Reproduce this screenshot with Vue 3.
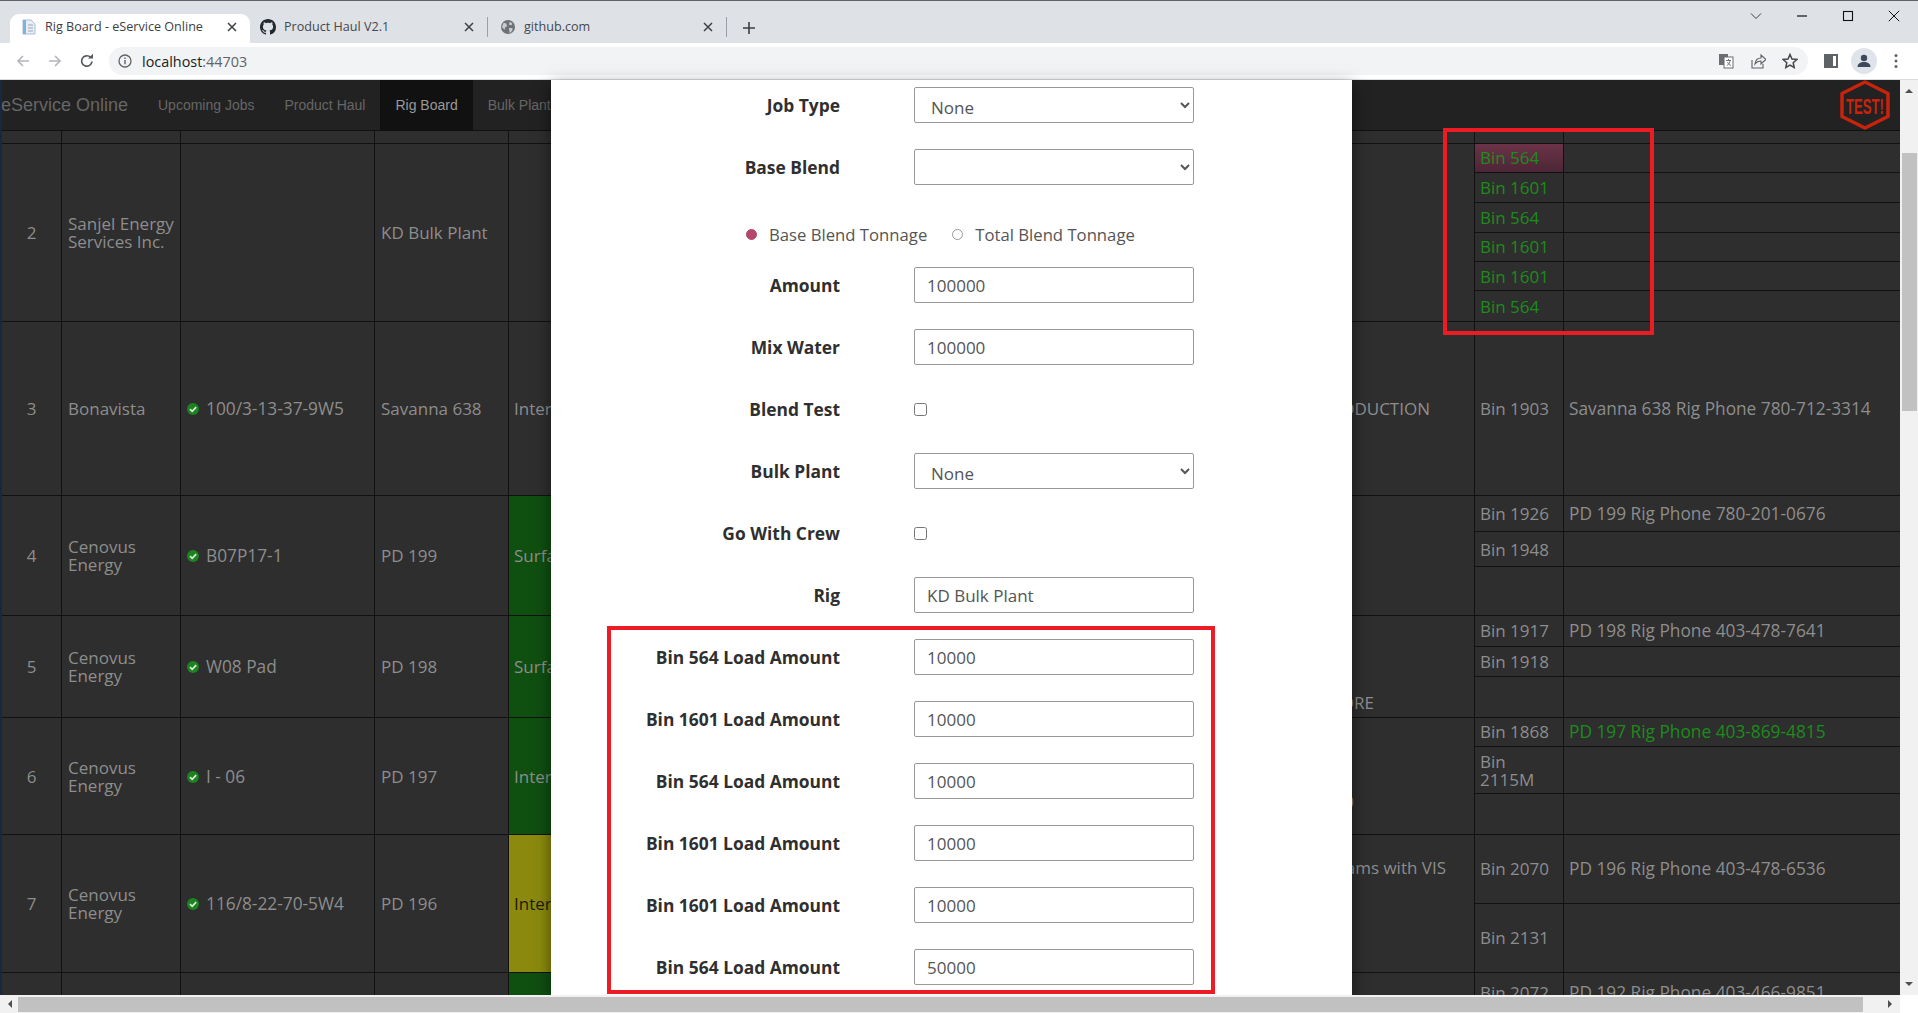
<template>
  <div class="window">
    <div class="tabstrip">
      <div class="tab active">
        <svg class="fav" viewBox="0 0 16 16" width="16" height="16">
          <path d="M2 1h8l4 4v10H2z" fill="#e8eef5" stroke="#a9bdd3" />
          <path d="M2 1h3v14H2z" fill="#7fb2e0" />
          <path d="M7 6h5M7 9h5M7 12h5" stroke="#9aa7b5" />
        </svg>
        <span class="tab-title">Rig Board - eService Online</span>
        <svg class="tab-x" viewBox="0 0 10 10" width="10" height="10"><path d="M1 1l8 8M9 1l-8 8" stroke="#3c4043" stroke-width="1.5" /></svg>
      </div>
      <div class="tab second">
        <svg class="fav" viewBox="0 0 16 16" width="16" height="16">
          <path fill="#24292f" d="M8 0C3.58 0 0 3.58 0 8c0 3.54 2.29 6.53 5.47 7.59.4.07.55-.17.55-.38 0-.19-.01-.82-.01-1.49-2.01.37-2.53-.49-2.69-.94-.09-.23-.48-.94-.82-1.13-.28-.15-.68-.52-.01-.53.63-.01 1.08.58 1.23.82.72 1.21 1.87.87 2.33.66.07-.52.28-.87.51-1.07-1.78-.2-3.64-.89-3.64-3.95 0-.87.31-1.59.82-2.15-.08-.2-.36-1.02.08-2.12 0 0 .67-.21 2.2.82.64-.18 1.32-.27 2-.27.68 0 1.36.09 2 .27 1.53-1.04 2.2-.82 2.2-.82.44 1.1.16 1.92.08 2.12.51.56.82 1.27.82 2.15 0 3.07-1.87 3.75-3.65 3.95.29.25.54.73.54 1.48 0 1.07-.01 1.93-.01 2.2 0 .21.15.46.55.38A8.013 8.013 0 0016 8c0-4.42-3.58-8-8-8z" />
        </svg>
        <span class="tab-title">Product Haul V2.1</span>
        <svg class="tab-x" viewBox="0 0 10 10" width="10" height="10"><path d="M1 1l8 8M9 1l-8 8" stroke="#3c4043" stroke-width="1.5" /></svg>
      </div>
      <div class="tab-sep"></div>
      <div class="tab third">
        <svg class="fav globe" viewBox="0 0 16 16" width="14" height="14">
          <circle cx="8" cy="8" r="8" fill="#6e7276" />
          <path d="M3 3l3 1 1 3-2 1-1 3-3-3zM10 2l3 2-1 2-3-1zM9 9l4 0 0 3-3 3z" fill="#c9ccd0" />
        </svg>
        <span class="tab-title">github.com</span>
        <svg class="tab-x" viewBox="0 0 10 10" width="10" height="10"><path d="M1 1l8 8M9 1l-8 8" stroke="#3c4043" stroke-width="1.5" /></svg>
      </div>
      <div class="tab-sep"></div>
      <svg class="plus" viewBox="0 0 12 12" width="12" height="12">
        <path d="M6 0v12M0 6h12" stroke="#3c4043" stroke-width="1.6" />
      </svg>
      <div class="win-controls">
        <svg viewBox="0 0 12 12" width="12" height="12"><path d="M1 3.5l5 5 5-5" fill="none" stroke="#3c4043" /></svg>
        <svg viewBox="0 0 12 12" width="12" height="12"><path d="M1 6h10" stroke="#111" stroke-width="1.2" /></svg>
        <svg viewBox="0 0 12 12" width="12" height="12"><rect x="1.5" y="1.5" width="9" height="9" fill="none" stroke="#111" stroke-width="1.1" /></svg>
        <svg viewBox="0 0 12 12" width="12" height="12"><path d="M.8.8l10.4 10.4M11.2.8L.8 11.2" stroke="#111" /></svg>
      </div>
    </div>

    <div class="toolbar">
      <svg class="nav-ico" viewBox="0 0 16 16" width="16" height="16"><path d="M14 8H3M8 3L3 8l5 5" fill="none" stroke="#b4b7bb" stroke-width="1.7" /></svg>
      <svg class="nav-ico" viewBox="0 0 16 16" width="16" height="16"><path d="M2 8h11M8 3l5 5-5 5" fill="none" stroke="#b4b7bb" stroke-width="1.7" /></svg>
      <svg class="nav-ico" viewBox="0 0 16 16" width="16" height="16"><path d="M13 8.5A5.2 5.2 0 1 1 11.6 4.4" fill="none" stroke="#55585c" stroke-width="1.7" /><path d="M9 5.6h5V.8z" fill="#55585c" /></svg>
      <div class="omnibox">
        <svg viewBox="0 0 14 14" width="14" height="14">
          <circle cx="7" cy="7" r="6" fill="none" stroke="#5f6368" stroke-width="1.3" />
          <path d="M7 6v4.2M7 3.6v1.3" stroke="#5f6368" stroke-width="1.4" />
        </svg>
        <span class="url">localhost<em>:44703</em></span>
        <div class="omni-right">
          <svg viewBox="0 0 16 16" width="16" height="16">
            <rect x="1" y="1" width="9" height="11" fill="#6a6d71" />
            <rect x="6" y="4" width="9" height="11" fill="#fff" stroke="#6a6d71" />
            <path d="M3 6.5h3M8 7.500h5M10.500 6v1.500M9 12.500c2-1 3-3 3-5M9.500 9c.5 1.500 2 3 3.500 3.500" fill="none" stroke="#6a6d71" stroke-width=".9" />
          </svg>
          <svg viewBox="0 0 16 16" width="16" height="16">
            <path d="M2 7v8h11v-4" fill="none" stroke="#5f6368" stroke-width="1.1" />
            <path d="M5 11c.5-4 3-6 6-6V2l5 4.5L11 11V8c-2.500 0-4.500 1-6 3z" fill="none" stroke="#5f6368" stroke-width="1.1" />
          </svg>
          <svg viewBox="0 0 16 16" width="16" height="16">
            <path d="M8 1.500l2 4.500 4.800.5-3.600 3.200 1 4.800L8 12.100l-4.200 2.400 1-4.800L1.200 6.500 6 6z" fill="none" stroke="#44474b" stroke-width="1.5" />
          </svg>
        </div>
      </div>
      <div class="tool-right">
        <svg viewBox="0 0 14 14" width="14" height="14"><path d="M0 0h14v14H0zM9 2v10h3V2z" fill="#5f6368" fill-rule="evenodd" /></svg>
        <div class="avatar">
          <svg viewBox="0 0 16 16" width="16" height="16">
            <circle cx="8" cy="5" r="3.200" fill="#3c4a5c" />
            <path d="M1.500 14c0-3.500 3-5 6.500-5s6.500 1.500 6.500 5z" fill="#3c4a5c" />
          </svg>
        </div>
        <svg viewBox="0 0 4 16" width="4" height="16">
          <circle cx="2" cy="2.500" r="1.500" fill="#5f6368" /><circle cx="2" cy="8" r="1.500" fill="#5f6368" /><circle cx="2" cy="13.500" r="1.500" fill="#5f6368" />
        </svg>
      </div>
    </div>

    <div class="viewport">
      <div class="page-col">
        <div class="page">
          <nav class="navbar">
            <span class="brand">eService Online</span>
            <a>Upcoming Jobs</a>
            <a>Product Haul</a>
            <a class="on">Rig Board</a>
            <a>Bulk Plant</a>
            <svg class="test-logo" viewBox="0 0 52 50" width="52" height="50">
              <path d="M26 2L49 13.500V36.500L26 48 3 36.500V13.500z" fill="none" stroke="#c8230d" stroke-width="3.500" stroke-linejoin="round" />
              <text x="26" y="33.500" text-anchor="middle" textLength="38" lengthAdjust="spacingAndGlyphs" class="test-txt">TEST!</text>
            </svg>
          </nav>
          <div class="row thead" style="height: 13px">
            <div class="c1"></div><div class="c2"></div><div class="c3"></div><div class="c4"></div><div class="c5"></div>
            <div class="note"></div><div class="bins"><div class="bin" style="height: 12px"><span class="b-name"></span><span class="b-phone"></span></div></div>
          </div>
          <div v-for="r in rows" :key="r.key" class="row" :style="{ height: r.h + 'px' }">
            <div class="c1">{{ r.n }}</div>
            <div class="c2"><span>{{ r.client }}</span></div>
            <div class="c3">
              <svg v-if="r.well" viewBox="0 0 12 12" width="12" height="12" class="ok">
                <circle cx="6" cy="6" r="6" fill="#1d8321" />
                <path d="M3 6.200l2.200 2.100L9.200 4.200" fill="none" stroke="#d5e8d5" stroke-width="1.800" />
              </svg>
              <span>{{ r.well }}</span>
            </div>
            <div class="c4">{{ r.rig }}</div>
            <div class="c5" :class="r.jobClass">{{ r.job }}</div>
            <div class="note">
              <span v-if="r.note" class="note-txt" :style="{ top: r.noteTop + 'px', right: r.noteRight + 'px' }">{{ r.note }}</span>
            </div>
            <div class="bins">
              <div v-for="(b, i) in r.bins" :key="i" class="bin" :style="{ height: b.h + 'px' }">
                <span class="b-name" :class="{ green: b.green, sel: b.sel }">{{ b.name }}</span>
                <span class="b-phone" :class="{ green: b.phoneGreen }">{{ b.phone }}</span>
              </div>
            </div>
          </div>
          <div class="annot annot-bins"></div>
        </div>
        <div class="hscroll">
          <span class="arrow-l"></span>
          <div class="h-thumb"></div>
          <span class="arrow-r"></span>
        </div>
      </div>
      <div class="vscroll">
        <span class="arrow-u"></span>
        <div class="v-thumb"></div>
        <span class="arrow-d"></span>
        <div class="corner"></div>
      </div>

      <div class="modal">
        <div class="frow">
          <label>Job Type</label>
          <select class="ctl sel-ctl"><option>None</option></select>
        </div>
        <div class="frow">
          <label>Base Blend</label>
          <select class="ctl sel-ctl"><option></option></select>
        </div>
        <div class="radio-row">
          <span class="radio checked"></span><span class="radio-label">Base Blend Tonnage</span>
          <span class="radio"></span><span class="radio-label">Total Blend Tonnage</span>
        </div>
        <div v-for="f in fields" :key="f.id" class="frow">
          <label>{{ f.label }}</label>
          <select v-if="f.type === 'select'" class="ctl sel-ctl"><option>{{ f.value }}</option></select>
          <input v-else-if="f.type === 'check'" type="checkbox" class="chk" />
          <input v-else type="text" class="ctl" :value="f.value" />
        </div>
        <div class="annot annot-form"></div>
      </div>
    </div>
  </div>
</template>

<script setup>
const phone = (rig, num) => `${rig} Rig Phone ${num}`

const rows = [
  {
    key: 2, n: 2, h: 178, client: 'Sanjel Energy Services Inc.', well: '', rig: 'KD Bulk Plant', job: '',
    bins: [
      { name: 'Bin 564', h: 29, green: true, sel: true },
      { name: 'Bin 1601', h: 30, green: true },
      { name: 'Bin 564', h: 30, green: true },
      { name: 'Bin 1601', h: 30, green: true },
      { name: 'Bin 1601', h: 29, green: true },
      { name: 'Bin 564', h: 30, green: true }
    ]
  },
  {
    key: 3, n: 3, h: 174, client: 'Bonavista', well: '100/3-13-37-9W5', rig: 'Savanna 638', job: 'Intermediate',
    note: 'PRODUCTION', noteTop: 78, noteRight: 44,
    bins: [{ name: 'Bin 1903', h: 174, phone: phone('Savanna 638', '780-712-3314') }]
  },
  {
    key: 4, n: 4, h: 120, client: 'Cenovus Energy', well: 'B07P17-1', rig: 'PD 199', job: 'Surface', jobClass: 'job-green',
    bins: [
      { name: 'Bin 1926', h: 36, phone: phone('PD 199', '780-201-0676') },
      { name: 'Bin 1948', h: 36 },
      { name: '', h: 48 }
    ]
  },
  {
    key: 5, n: 5, h: 102, client: 'Cenovus Energy', well: 'W08 Pad', rig: 'PD 198', job: 'Surface', jobClass: 'job-green',
    note: 'CORE', noteTop: 78, noteRight: 100,
    bins: [
      { name: 'Bin 1917', h: 31, phone: phone('PD 198', '403-478-7641') },
      { name: 'Bin 1918', h: 31 },
      { name: '', h: 40 }
    ]
  },
  {
    key: 6, n: 6, h: 117, client: 'Cenovus Energy', well: 'I - 06', rig: 'PD 197', job: 'Intermediate', jobClass: 'job-green',
    note: '0', noteTop: 75, noteRight: 120,
    bins: [
      { name: 'Bin 1868', h: 29, phone: phone('PD 197', '403-869-4815'), phoneGreen: true },
      { name: 'Bin 2115M', h: 48 },
      { name: '', h: 40 }
    ]
  },
  {
    key: 7, n: 7, h: 138, client: 'Cenovus Energy', well: '116/8-22-70-5W4', rig: 'PD 196', job: 'Intermediate', jobClass: 'job-olive',
    note: 'Rams with VIS', noteTop: 24, noteRight: 28,
    bins: [
      { name: 'Bin 2070', h: 69, phone: phone('PD 196', '403-478-6536') },
      { name: 'Bin 2131', h: 69 }
    ]
  },
  {
    key: 8, h: 60, client: '', well: '', rig: '', job: '', jobClass: 'job-green',
    bins: [{ name: 'Bin 2072', h: 38, phone: phone('PD 192', '403-466-9851') }]
  }
]

const loads = ['564', '1601', '564', '1601', '1601', '564']

const fields = [
  { id: 'amount', label: 'Amount', value: '100000' },
  { id: 'water', label: 'Mix Water', value: '100000' },
  { id: 'test', label: 'Blend Test', type: 'check' },
  { id: 'plant', label: 'Bulk Plant', type: 'select', value: 'None' },
  { id: 'crew', label: 'Go With Crew', type: 'check' },
  { id: 'rig', label: 'Rig', value: 'KD Bulk Plant' },
  ...loads.map((bin, i) => ({
    id: 'load' + i,
    label: `Bin ${bin} Load Amount`,
    value: i === 5 ? '50000' : '10000'
  }))
]
</script>

<style>
html, body { margin: 0; overflow: hidden; }
</style>

<style scoped>
.window { width: 1918px; height: 1013px; display: flex; flex-direction: column; font-family: "Open Sans", "Noto Sans", sans-serif; overflow: hidden; }

.tabstrip { height: 43px; box-sizing: border-box; background: #dee1e6; border-top: 1px solid #5f6368; display: flex; align-items: flex-end; padding-left: 10px; position: relative; }
.tab { width: 240px; height: 29px; box-sizing: border-box; padding: 0 11px 4px; display: flex; align-items: center; font-size: 12.6px; color: #45484c; flex: none; }
.tab.second { width: 237px; padding-left: 10px; }
.tab.third { width: 238px; padding-left: 12px; }
.tab.third .tab-title { margin-left: 9px; }
.tab.active { background: #fff; border-radius: 9px 9px 0 0; color: #3c4043; }
.tab-title { margin-left: 8px; flex: 1; white-space: nowrap; }
.tab-x { flex: none; margin-right: 2px; }
.fav { flex: none; }
.globe { margin-left: 1px; }
.tab-sep { width: 1px; height: 20px; background: #9aa0a6; margin-bottom: 6px; flex: none; }
.plus { margin: 0 0 9px 16px; }
.win-controls { margin-left: auto; align-self: flex-start; display: flex; gap: 34px; padding: 9px 18px 0 0; }

.toolbar { height: 37px; box-sizing: border-box; background: #fff; border-bottom: 1px solid #dadce0; display: flex; align-items: center; padding: 0 17px 0 15px; }
.nav-ico { margin-right: 16px; flex: none; }
.omnibox { width: 1699px; margin-left: -2px; height: 28px; background: #f1f3f4; border-radius: 14px; display: flex; align-items: center; padding-left: 9px; box-sizing: border-box; flex: none; }
.url { font-size: 14.4px; margin-left: 10px; color: #202124; }
.url em { font-style: normal; color: #5f6368; }
.omni-right { margin-left: auto; display: flex; gap: 16px; padding-right: 10px; }
.tool-right { display: flex; align-items: center; margin-left: 16px; gap: 17px; }
.avatar { width: 26px; height: 26px; margin-left: -4px; border-radius: 50%; background: #dfe3ea; display: flex; align-items: center; justify-content: center; }

.viewport { height: 933px; display: flex; position: relative; }
.page-col { width: 1900px; display: flex; flex-direction: column; flex: none; }
.page { height: 915px; background: #2e2e2e; overflow: hidden; position: relative; border-left: 2px solid #1a2744; box-sizing: border-box; color: #8d8d8d; font-size: 17px; line-height: 18px; }

.navbar { height: 51px; box-sizing: border-box; background: #222; border-bottom: 1px solid #101010; display: flex; font-family: "Liberation Sans", Arial, sans-serif; font-size: 14px; color: #666; position: relative; }
.navbar .brand { font-size: 18px; line-height: 50px; width: 142px; margin-left: -1px; flex: none; color: #666; }
.navbar a { padding: 0 15px; line-height: 50px; flex: none; }
.navbar a.on { background: #111; color: #999; }
.test-logo { position: absolute; right: 9px; top: 0; }
.test-txt { font-family: "Liberation Sans", Arial, sans-serif; font-weight: 700; font-size: 22px; fill: #c8230d; }

.row { display: flex; border-bottom: 1px solid #111; box-sizing: border-box; flex: none; }
.thead { background: #2e2e2e; }
.row > div { flex: none; box-sizing: border-box; }
.c1, .c2, .c3, .c4, .b-name { border-right: 1px solid #111; }
.c1 { width: 60px; padding-top: 1px; display: flex; align-items: center; justify-content: center; }
.c2 { width: 119px; padding: 1px 6px 0; display: flex; align-items: center; }
.c3 { width: 194px; padding: 1px 6px 0; display: flex; align-items: center; gap: 7px; font-size: 17.3px; }
.c4 { width: 134px; padding: 1px 6px 0; display: flex; align-items: center; }
.c5 { width: 100px; padding: 1px 5px 0; display: flex; align-items: center; white-space: nowrap; }
.job-green { background: #0f4f10; }
.job-olive { background: #8b8a0e; color: #1c1c00; }
.row > .note { width: 866px; position: relative; border-right: 1px solid #111; }
.note-txt { position: absolute; white-space: nowrap; }
.row > .bins { width: 425px; display: flex; flex-direction: column; }
.bin { display: flex; box-sizing: border-box; border-bottom: 1px solid #111; }
.bin:last-child { border-bottom: 0; }
.b-name { width: 89px; flex: none; box-sizing: border-box; padding: 1px 5px 0; display: flex; align-items: center; }
.b-phone { flex: 1; padding: 1px 5px 0; display: flex; align-items: center; white-space: nowrap; font-size: 17.3px; }
.green { color: #1c8c1c; }
.sel { background: linear-gradient(#6b3347, #4c2636); }

.annot { position: absolute; border: 4px solid #ed1c24; box-sizing: border-box; pointer-events: none; }
.annot-bins { left: 1441px; top: 48px; width: 211px; height: 207px; }
.annot-form { left: 56px; top: 546px; width: 608px; height: 368px; }

.hscroll { height: 18px; background: #f1f1f1; display: flex; align-items: center; position: relative; z-index: 2; }
.h-thumb { position: absolute; left: 18px; width: 1845px; top: 2px; bottom: 1px; background: #c1c1c1; }
.arrow-l, .arrow-r { position: absolute; width: 0; height: 0; border: 4px solid transparent; top: 5px; }
.arrow-l { left: 4px; border-right-color: #505050; }
.arrow-r { right: 4px; border-left-color: #505050; }

.vscroll { flex: 1; background: #f1f1f1; position: relative; z-index: 2; }
.v-thumb { position: absolute; left: 2px; right: 1px; top: 73px; height: 258px; background: #c1c1c1; }
.arrow-u, .arrow-d { position: absolute; left: 5px; width: 0; height: 0; border: 4px solid transparent; }
.arrow-u { top: 5px; border-bottom-color: #505050; }
.arrow-d { top: 902px; border-top-color: #505050; }
.corner { position: absolute; bottom: 0; left: 0; right: 0; height: 18px; background: #fff; }

.modal { position: absolute; z-index: 1; left: 551px; top: 0; width: 801px; height: 915px; background: #fff; padding-top: 7px; box-sizing: border-box; overflow: hidden; box-shadow: 0 5px 15px rgba(0, 0, 0, 0.5); color: #333; font-size: 17px; }
.frow { display: grid; grid-template-columns: 289px 280px; column-gap: 74px; align-items: center; height: 36px; margin-bottom: 26px; }
.frow label { text-align: right; font-weight: 700; color: #2f2f2f; font-size: 17.4px; }
.ctl { width: 280px; height: 36px; box-sizing: border-box; border: 1px solid #999; border-radius: 2px; background: #fff; padding: 0 12px; font: 17px "Open Sans", "Noto Sans", sans-serif; color: #555; }
.sel-ctl { padding: 4px 12px 0 12px; }
.chk { width: 13px; height: 13px; margin: 0; }
.radio-row { height: 30px; box-sizing: border-box; padding: 17px 0 0 195px; margin-bottom: 26px; display: flex; align-items: center; font-size: 16.7px; color: #555; }
.radio { width: 11px; height: 11px; box-sizing: border-box; border: 1px solid #999; border-radius: 50%; flex: none; }
.radio.checked { background: #b5476b; border-color: #b5476b; }
.radio-label { margin-left: 12px; margin-right: 25px; white-space: nowrap; }
</style>
